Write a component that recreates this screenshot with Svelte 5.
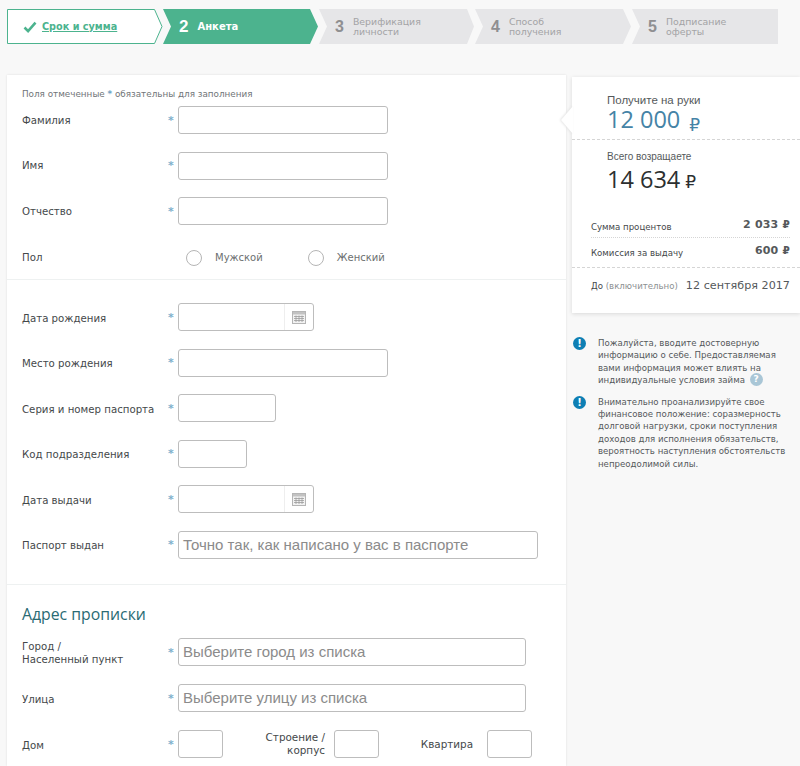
<script>
	const steps = [
		{ n: 3, title: ['Верификация', 'личности'], w: 155, pts: '0,0 148,0 155,17.5 148,35 0,35 8,17.5' },
		{ n: 4, title: ['Способ', 'получения'], w: 156, pts: '0,0 148,0 156,17.5 148,35 0,35 8,17.5' },
		{ n: 5, title: ['Подписание', 'оферты'], w: 146, pts: '0,0 146,0 146,35 0,35 8,17.5' }
	];
	const personal = [
		{ label: 'Фамилия', size: 'w210' },
		{ label: 'Имя', size: 'w210' },
		{ label: 'Отчество', size: 'w210' }
	];
	const passport = [
		{ label: 'Дата рождения', date: true },
		{ label: 'Место рождения', size: 'w210' },
		{ label: 'Серия и номер паспорта', size: 'w98' },
		{ label: 'Код подразделения', size: 'w69' },
		{ label: 'Дата выдачи', date: true },
		{ label: 'Паспорт выдан', size: 'w360', hint: 'Точно так, как написано у вас в паспорте' }
	];
</script>

{#snippet calendar()}
	<svg class="cal" width="14" height="13" viewBox="0 0 14 13">
		<rect x="0.5" y="0.5" width="13" height="12" fill="#f2f2f2" stroke="#b5b5b5" />
		<rect x="1" y="1" width="12" height="2.5" fill="#c2c2c2" />
		<path d="M2 5.5h10M2 7.5h10M2 9.5h10M4 4.5v6.5M7 4.5v6.5M10 4.5v6.5" stroke="#9c9c9c" stroke-width="0.8" />
	</svg>
{/snippet}

{#snippet info()}
	<span class="info">!</span>
{/snippet}

{#snippet rub()}
	<span class="rub">₽</span>
{/snippet}

<div class="page">
	<nav class="stepper">
		<div class="step" style="width:156px">
			<svg width="156" height="35" viewBox="0 0 156 35">
				<polygon points="0.5,0.5 147.5,0.5 155,17.5 147.5,34.5 0.5,34.5" fill="#fff" stroke="#4cb38e" />
			</svg>
			<div class="step-body done">
				<svg width="14" height="12" viewBox="0 0 14 12">
					<path d="M1.5 6.5l3.6 3.6 7.4-8.4" fill="none" stroke="#4cb38e" stroke-width="2.6" />
				</svg>
				<span class="done-link">Срок и сумма</span>
			</div>
		</div>
		<div class="step" style="width:155px">
			<svg width="155" height="35" viewBox="0 0 155 35">
				<polygon points="0,0 147,0 155,17.5 147,35 0,35 8,17.5" fill="#4cb38e" />
			</svg>
			<div class="step-body active">
				<span class="num">2</span>
				<span class="active-title">Анкета</span>
			</div>
		</div>
		{#each steps as s}
			<div class="step next" style="width:{s.w}px">
				<svg width={s.w} height="35" viewBox="0 0 {s.w} 35">
					<polygon points={s.pts} fill="#e6e6e8" />
				</svg>
				<div class="step-body todo">
					<span class="num">{s.n}</span>
					<span class="todo-title">{s.title[0]}<br />{s.title[1]}</span>
				</div>
			</div>
		{/each}
	</nav>

	<div class="columns">
		<main class="form">
			<section class="group first">
				<p class="note">Поля отмеченные <b>*</b> обязательны для заполнения</p>
				{#each personal as f}
					<div class="row">
						<span class="label">{f.label}</span>
						<span class="star">*</span>
						<div class="input {f.size}"></div>
					</div>
				{/each}
				<div class="row gender">
					<span class="label">Пол</span>
					<div class="radios">
						<span class="radio"></span><span class="radio-label">Мужской</span>
						<span class="radio second"></span><span class="radio-label">Женский</span>
					</div>
				</div>
			</section>

			<section class="group passport">
				{#each passport as f}
					<div class="row">
						<span class="label">{f.label}</span>
						<span class="star">*</span>
						{#if f.date}
							<div class="input w136 date"><span class="cal-box">{@render calendar()}</span></div>
						{:else}
							<div class="input {f.size}">{f.hint ?? ''}</div>
						{/if}
					</div>
				{/each}
			</section>

			<section class="group address">
				<h2>Адрес прописки</h2>
				<div class="row">
					<span class="label">Город /<br />Населенный пункт</span>
					<span class="star">*</span>
					<div class="input w348">Выберите город из списка</div>
				</div>
				<div class="row">
					<span class="label">Улица</span>
					<span class="star">*</span>
					<div class="input w348">Выберите улицу из списка</div>
				</div>
				<div class="row">
					<span class="label">Дом</span>
					<span class="star">*</span>
					<div class="input w45"></div>
					<span class="sub-label building">Строение /<br />корпус</span>
					<div class="input w45"></div>
					<span class="sub-label flat">Квартира</span>
					<div class="input w45"></div>
				</div>
			</section>
		</main>

		<aside class="side">
			<div class="summary">
				<span class="pointer"></span>
				<div class="get">
					<div class="cap">Получите на руки</div>
					<div class="amount blue">12 000<span class="rub big">₽</span></div>
				</div>
				<div class="total">
					<div class="cap small">Всего возращаете</div>
					<div class="amount dark">14 634<span class="rub big">₽</span></div>
				</div>
				<div class="fees">
					<div class="fee"><span>Сумма процентов</span><b>2 033 {@render rub()}</b></div>
					<div class="fee"><span>Комиссия за выдачу</span><b>600 {@render rub()}</b></div>
				</div>
				<div class="due">
					<span>До <i>(включительно)</i></span>
					<span class="due-date">12 сентября 2017</span>
				</div>
			</div>

			<div class="tip">
				{@render info()}
				<p>Пожалуйста, вводите достоверную информацию о себе. Предоставляемая вами информация может влиять на индивидуальные условия займа <span class="q">?</span></p>
			</div>
			<div class="tip">
				{@render info()}
				<p>Внимательно проанализируйте свое финансовое положение: соразмерность долговой нагрузки, сроки поступления доходов для исполнения обязательств, вероятность наступления обстоятельств непреодолимой силы.</p>
			</div>
		</aside>
	</div>
</div>

<style>
	:global(body) { margin: 0; background: #f8f8f8; }
	.page {
		height: 766px;
		overflow: hidden;
		font-family: "DejaVu Sans", sans-serif;
		color: #44484a;
		font-size: 10px;
	}

	.stepper { display: flex; padding: 9px 0 0 7px; height: 35px; }
	.step { position: relative; height: 35px; flex: none; }
	.step.next { margin-left: 1px; }
	.step > svg { position: absolute; inset: 0; }
	.step-body { position: relative; display: flex; align-items: center; height: 35px; }
	.done { padding-left: 16px; gap: 5px; }
	.done-link { color: #4cb38e; font-size: 9.7px; font-weight: bold; text-decoration: underline; }
	.active { padding-left: 16px; gap: 9px; color: #fff; }
	.num { font-size: 16px; font-weight: bold; font-family: "Liberation Sans", sans-serif; }
	.active .num { font-size: 17px; }
	.active-title { font-size: 10px; font-weight: bold; }
	.todo { padding-left: 16px; gap: 9px; color: #a3a3a5; }
	.todo .num { color: #8f8f91; }
	.todo-title { font-size: 9.4px; line-height: 10px; }

	.columns { display: flex; align-items: flex-start; margin-top: 31px; padding-left: 7px; }
	.form {
		width: 559px;
		height: 691px;
		flex: none;
		background: #fff;
		box-shadow: 0 0 2px #dedede;
		box-sizing: border-box;
	}
	.group { padding: 0 15px; border-bottom: 1px solid #eef1f1; }
	.group.first { height: 205px; padding-top: 14px; box-sizing: border-box; }
	.note { margin: 0 0 6px; font-size: 8.8px; line-height: 11px; color: #6f7477; }
	.note b { color: #6fa3c4; }
	.row { display: flex; align-items: center; height: 45.5px; position: relative; }
	.row .input { margin-top: -17.5px; }
	.row .label, .row .star, .row .sub-label { margin-top: -17.5px; }
	.label { width: 146px; flex: none; font-size: 10.2px; line-height: 13px; color: #44484a; }
	.star { width: 10px; flex: none; color: #7fb0cc; font-size: 11px; font-weight: bold; }
	.input {
		height: 28px;
		box-sizing: border-box;
		border: 1px solid #bdbdbd;
		border-radius: 3px;
		background: #fff;
		flex: none;
		padding-left: 4px;
		font-family: "Liberation Sans", sans-serif;
		font-size: 15px;
		line-height: 26px;
		color: #8b8b8b;
		white-space: nowrap;
	}
	.w210 { width: 210px; }
	.w98 { width: 98px; }
	.w69 { width: 69px; }
	.w136 { width: 136px; }
	.w360 { width: 360px; }
	.w348 { width: 348px; }
	.w45 { width: 45px; }
	.date { display: flex; justify-content: flex-end; padding: 0; }
	.cal-box {
		width: 28px;
		border-left: 1px solid #eee;
		display: flex;
		align-items: center;
		justify-content: center;
	}
	.gender { height: 30px; }
	.gender .label { margin-top: 0; width: 164px; }
	.radios { display: flex; align-items: center; }
	.radio {
		width: 14px;
		height: 14px;
		border: 1px solid #b5b5b5;
		border-radius: 50%;
		background: #fff;
	}
	.radio.second { margin-left: 45px; }
	.radio-label { margin-left: 13px; font-size: 10px; color: #6c6f70; }

	.group.passport { height: 305px; padding-top: 23px; box-sizing: border-box; }
	.group.passport .row .label { margin-top: -15.5px; }
	.group.address { border-bottom: 0; padding-top: 19px; }
	h2 { margin: 0 0 14px; font-size: 15.8px; line-height: 20px; font-weight: normal; color: #2a6b74; font-family: "Open Sans", sans-serif; }
	.address .row { height: 46px; }
	.address .row .input, .address .row .star, .address .row .sub-label { margin-top: -18px; }
	.address .row .label { margin-top: -16px; }
	.sub-label { font-size: 10.4px; line-height: 13px; text-align: right; flex: none; }
	.building { width: 102px; margin-right: 9px; }
	.flat { width: 94px; margin-right: 14px; }

	.side { width: 228px; flex: none; margin-left: 6px; margin-top: 2px; }
	.summary {
		position: relative;
		background: #fff;
		box-shadow: 0 1px 4px #d9d9d9;
		height: 236px;
		box-sizing: border-box;
	}
	.pointer {
		position: absolute;
		left: -11px;
		top: 29px;
		width: 12px;
		height: 28px;
		filter: drop-shadow(-1px 0 1px #e2e2e2);
	}
	.pointer::before {
		content: "";
		position: absolute;
		inset: 0;
		background: #fff;
		clip-path: polygon(100% 0, 0 50%, 100% 100%);
	}
	.get { height: 63px; box-sizing: border-box; padding: 16px 0 0 35px; border-bottom: 1px dashed #d5d5d5; }
	.cap { font-family: "Liberation Sans", sans-serif; font-size: 11.5px; line-height: 14px; color: #55595b; }
	.cap.small { font-size: 10px; line-height: 12px; }
	.amount { font-family: "Open Sans", sans-serif; font-size: 23.5px; line-height: 28px; }
	.blue { color: #4583a6; margin-top: -2px; }
	.blue .rub.big { margin-left: 9px; position: relative; top: 3px; }
	.dark { color: #2c2f30; margin-top: 2px; }
	.dark .rub.big { margin-left: 5px; }
	.total { height: 72px; padding: 11px 0 0 35px; box-sizing: border-box; }
	.rub { font-family: "DejaVu Sans", sans-serif; font-size: 10.5px; }
	.rub.big { font-size: 17px; }
	.fees { margin: 0 10px 0 19px; }
	.fee {
		display: flex;
		justify-content: space-between;
		align-items: center;
		height: 25px;
		font-size: 8.6px;
		box-sizing: border-box;
	}
	.fee span:first-child { margin-top: 5px; }
	.fee + .fee { border-top: 1px dotted #d5d5d5; }
	.fee b { font-size: 11px; color: #55595b; letter-spacing: 0.2px; }
	.due {
		margin-top: 5px;
		border-top: 1px dashed #d5d5d5;
		padding: 11px 10px 0 19px;
		display: flex;
		justify-content: space-between;
		align-items: center;
		font-size: 8.6px;
	}
	.due i { font-style: normal; color: #8c9092; }
	.due-date { font-size: 11.2px; color: #55595b; }

	.tip { display: flex; padding-left: 1px; margin-top: 9px; }
	.summary + .tip { margin-top: 24px; }
	.info {
		width: 13px;
		height: 13px;
		border-radius: 50%;
		background: #0e7fb4;
		color: #fff;
		font-size: 10px;
		font-weight: bold;
		line-height: 13px;
		text-align: center;
		flex: none;
		margin-right: 12px;
	}
	.tip p { margin: 0; width: 190px; font-size: 8.6px; line-height: 12.4px; color: #55595b; }
	.q {
		display: inline-block;
		width: 13px;
		height: 13px;
		margin: -3px 0 -1px 2px;
		border-radius: 50%;
		background: #a9c6d6;
		color: #fff;
		font-weight: bold;
		font-size: 9px;
		line-height: 13px;
		text-align: center;
		vertical-align: middle;
	}
</style>
